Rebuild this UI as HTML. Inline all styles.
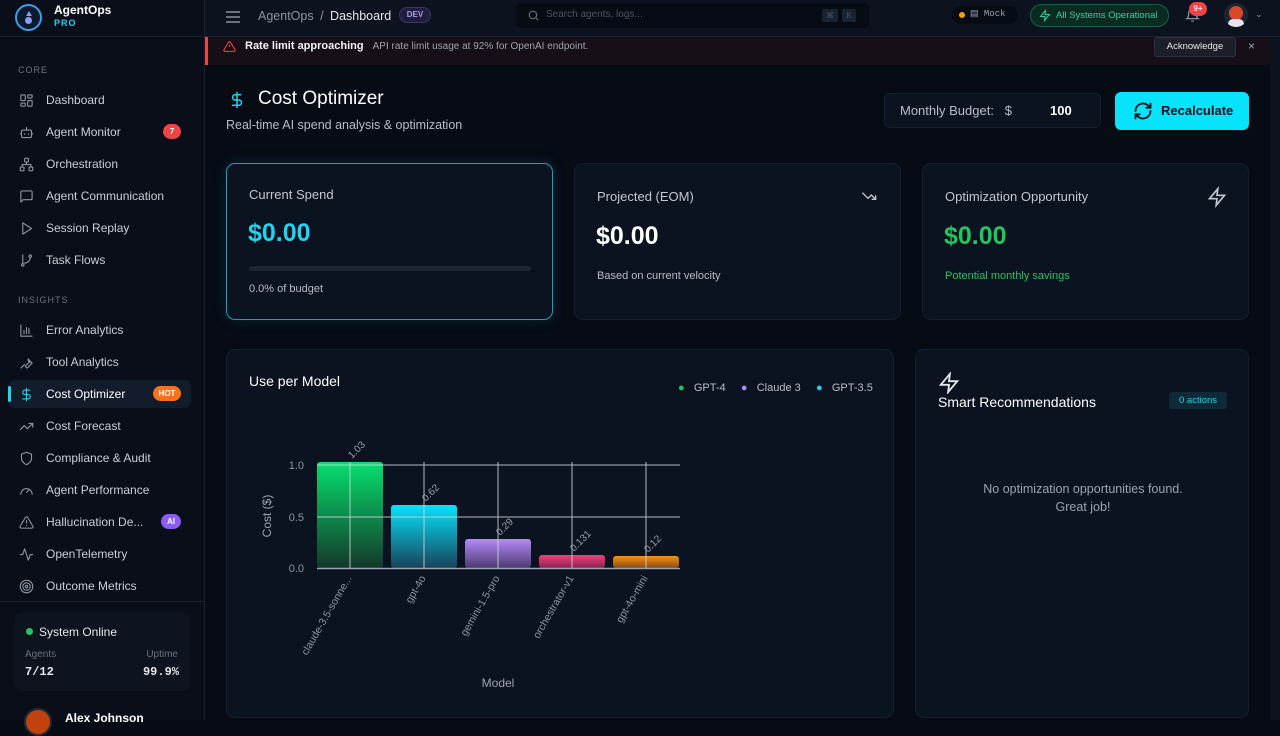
<!DOCTYPE html>
<html><head><meta charset="utf-8"><style>
*{box-sizing:border-box;margin:0;padding:0}
body{width:1280px;height:720px;overflow:hidden;background:#060b14;font-family:"Liberation Sans",sans-serif;color:#e5e7eb;position:relative}
.sb{position:absolute;left:0;top:0;width:205px;height:720px;background:#090e19;border-right:1px solid #1a2130}
.logo{height:37px;border-bottom:1px solid #1a2130;position:relative}
.sec{position:absolute;left:18px;font-size:9px;letter-spacing:1px;color:#6b7280}
.it{position:absolute;left:8px;width:183px;height:28px;display:flex;align-items:center;font-size:12px;color:#c9ced6}
.it svg{position:absolute;left:11px;width:15px;height:15px;fill:none;stroke:#8b95a3;stroke-width:1.8;stroke-linecap:round;stroke-linejoin:round}
.it span.t{position:absolute;left:38px}
.bd{position:absolute;font-size:8px;font-weight:bold;border-radius:8px;color:#fff;text-align:center;line-height:15px;height:15px}
.hdr{position:absolute;left:205px;top:0;right:0;height:37px;background:#0c131f;border-bottom:1px solid #1a2130}
.card{position:absolute;background:#0b1320;border:1px solid #161f2d;border-radius:9px}
.lbl{font-size:13px;color:#c2c8d0}
.big{font-size:25px;font-weight:bold}
</style></head><body>
<div class="sb">
 <div class="logo">
  <div style="position:absolute;left:15px;top:4px;width:27px;height:27px;border-radius:50%;border:2px solid #3aa0e8;background:#0d1a2e"></div>
  <div style="position:absolute;left:26px;top:11px;width:0;height:0;border-left:3px solid transparent;border-right:3px solid transparent;border-bottom:5px solid #8b9cf8"></div>
  <div style="position:absolute;left:25px;top:17px;width:7px;height:7px;border-radius:50%;background:#8b9cf8"></div>
  <div style="position:absolute;left:54px;top:3px;font-size:12px;font-weight:bold;color:#fff">AgentOps</div>
  <div style="position:absolute;left:54px;top:18px;font-size:9px;font-weight:bold;color:#22d3ee;letter-spacing:1px">PRO</div>
 </div>
 <div class="sec" style="top:65px">CORE</div>
 <div class="it" style="top:86px"><svg viewBox="0 0 24 24"><rect x="3" y="3" width="7" height="9" rx="1"/><rect x="14" y="3" width="7" height="5" rx="1"/><rect x="14" y="12" width="7" height="9" rx="1"/><rect x="3" y="16" width="7" height="5" rx="1"/></svg><span class="t">Dashboard</span></div>
 <div class="it" style="top:118px"><svg viewBox="0 0 24 24"><rect x="4" y="8" width="16" height="12" rx="2"/><path d="M12 8V4M9 14v1M15 14v1M2 14h2M20 14h2"/></svg><span class="t">Agent Monitor</span><div class="bd" style="left:155px;top:6px;width:18px;background:#ef4444">7</div></div>
 <div class="it" style="top:150px"><svg viewBox="0 0 24 24"><rect x="9" y="2" width="6" height="6" rx="1"/><rect x="2" y="16" width="6" height="6" rx="1"/><rect x="16" y="16" width="6" height="6" rx="1"/><path d="M5 16v-4h14v4M12 8v4"/></svg><span class="t">Orchestration</span></div>
 <div class="it" style="top:182px"><svg viewBox="0 0 24 24"><path d="M21 15a2 2 0 0 1-2 2H7l-4 4V5a2 2 0 0 1 2-2h14a2 2 0 0 1 2 2z"/></svg><span class="t">Agent Communication</span></div>
 <div class="it" style="top:214px"><svg viewBox="0 0 24 24"><path d="M6 3l14 9-14 9z"/></svg><span class="t">Session Replay</span></div>
 <div class="it" style="top:246px"><svg viewBox="0 0 24 24"><circle cx="6" cy="19" r="2"/><circle cx="18" cy="5" r="2"/><path d="M6 3v14M18 7a9 9 0 0 1-9 9"/></svg><span class="t">Task Flows</span></div>
 <div class="sec" style="top:295px">INSIGHTS</div>
 <div class="it" style="top:316px"><svg viewBox="0 0 24 24"><path d="M3 3v18h18M8 17v-5M12 17V7M16 17v-8"/></svg><span class="t">Error Analytics</span></div>
 <div class="it" style="top:348px"><svg viewBox="0 0 24 24"><path d="M14.7 6.3a4 4 0 0 0 5 5L21 13l-8 8-3-3 8-8zM3 21l6-6"/></svg><span class="t">Tool Analytics</span></div>
 <div class="it" style="top:380px;background:#131c2b;border-radius:7px"><div style="position:absolute;left:0;top:6px;width:3px;height:16px;background:#22d3ee;border-radius:2px"></div><svg viewBox="0 0 24 24" style="stroke:#22d3ee"><path d="M12 2v20M17 5H9.5a3.5 3.5 0 0 0 0 7h5a3.5 3.5 0 0 1 0 7H6"/></svg><span class="t" style="color:#fff">Cost Optimizer</span><div class="bd" style="left:145px;top:6px;width:28px;background:#f97316">HOT</div></div>
 <div class="it" style="top:412px"><svg viewBox="0 0 24 24"><path d="M22 7l-8.5 8.5-5-5L2 17M16 7h6v6"/></svg><span class="t">Cost Forecast</span></div>
 <div class="it" style="top:444px"><svg viewBox="0 0 24 24"><path d="M12 22s8-4 8-10V5l-8-3-8 3v7c0 6 8 10 8 10z"/></svg><span class="t">Compliance &amp; Audit</span></div>
 <div class="it" style="top:476px"><svg viewBox="0 0 24 24"><path d="M3 18a9 9 0 1 1 18 0M12 15l4-4"/></svg><span class="t">Agent Performance</span></div>
 <div class="it" style="top:508px"><svg viewBox="0 0 24 24"><path d="M10.3 3.9L1.8 18a2 2 0 0 0 1.7 3h17a2 2 0 0 0 1.7-3L13.7 3.9a2 2 0 0 0-3.4 0zM12 9v4M12 17h.01"/></svg><span class="t">Hallucination De...</span><div class="bd" style="left:153px;top:6px;width:20px;background:#8b5cf6">AI</div></div>
 <div class="it" style="top:540px"><svg viewBox="0 0 24 24"><path d="M22 12h-4l-3 9L9 3l-3 9H2"/></svg><span class="t">OpenTelemetry</span></div>
 <div class="it" style="top:572px"><svg viewBox="0 0 24 24"><circle cx="12" cy="12" r="10"/><circle cx="12" cy="12" r="6"/><circle cx="12" cy="12" r="2"/></svg><span class="t">Outcome Metrics</span></div>
 <div style="position:absolute;left:0;top:601px;width:204px;border-top:1px solid #1a2130"></div>
 <div style="position:absolute;left:14px;top:612px;width:176px;height:79px;background:#0d1420;border-radius:8px">
  <div style="position:absolute;left:12px;top:16px;width:7px;height:7px;border-radius:50%;background:#22c55e"></div>
  <div style="position:absolute;left:25px;top:13px;font-size:12px;color:#e5e7eb">System Online</div>
  <div style="position:absolute;left:11px;top:37px;font-size:10px;color:#6b7280">Agents</div>
  <div style="position:absolute;right:12px;top:37px;font-size:10px;color:#6b7280">Uptime</div>
  <div style="position:absolute;left:11px;top:53px;font-size:12px;font-family:'Liberation Mono',monospace;font-weight:bold;color:#e5e7eb">7/12</div>
  <div style="position:absolute;right:11px;top:53px;font-size:12px;font-family:'Liberation Mono',monospace;font-weight:bold;color:#e5e7eb">99.9%</div>
 </div>
 <div style="position:absolute;left:24px;top:708px;width:28px;height:28px;border-radius:50%;background:#c2410c;border:2px solid #1f2a3a"></div>
 <div style="position:absolute;left:65px;top:711px;font-size:12px;font-weight:bold;color:#fff">Alex Johnson</div>
</div>
<div class="hdr">
 <div style="position:absolute;left:21px;top:11px;width:14px;height:2px;background:#6b7280;box-shadow:0 5px 0 #6b7280,0 10px 0 #6b7280"></div>
 <div style="position:absolute;left:53px;top:9px;font-size:12.5px;color:#8b95a3">AgentOps <span style="margin:0 3px">/</span> <span style="color:#e5e7eb">Dashboard</span></div>
 <div style="position:absolute;left:194px;top:7px;width:32px;height:16px;border-radius:8px;background:#221d3d;border:1px solid #3b3470;font-size:8px;color:#a5a0e0;text-align:center;line-height:14px;font-weight:bold">DEV</div>
 <div style="position:absolute;left:311px;top:3px;width:353px;height:25px;background:#060b14;border-radius:5px">
  <svg style="position:absolute;left:11px;top:6px" width="13" height="13" viewBox="0 0 24 24" fill="none" stroke="#6b7280" stroke-width="2"><circle cx="11" cy="11" r="7"/><path d="M21 21l-5-5"/></svg>
  <div style="position:absolute;left:30px;top:6px;font-size:10px;color:#4b5563">Search agents, logs...</div>
  <div style="position:absolute;left:306px;top:6px;width:16px;height:13px;background:#1a2330;border-radius:2px;font-size:8px;color:#4b5563;text-align:center;line-height:13px">⌘</div>
  <div style="position:absolute;left:326px;top:6px;width:14px;height:13px;background:#1a2330;border-radius:2px;font-size:8px;color:#4b5563;text-align:center;line-height:13px">K</div>
 </div>
 <div style="position:absolute;left:747px;top:6px;width:66px;height:18px;background:#060b14;border-radius:9px"><div style="position:absolute;left:7px;top:6px;width:6px;height:6px;border-radius:50%;background:#f59e0b"></div><div style="position:absolute;left:18px;top:3px;font-size:9px;font-family:'Liberation Mono',monospace;color:#9ca3af">▤ Mock</div></div>
 <div style="position:absolute;left:825px;top:4px;width:139px;height:23px;background:#0b2a22;border:1px solid #166048;border-radius:12px;font-size:9.5px;color:#34d399;line-height:21px;padding-left:25px">All Systems Operational<svg style="position:absolute;left:8px;top:4px" width="12" height="13" viewBox="0 0 24 24" fill="none" stroke="#34d399" stroke-width="2"><path d="M13 2L3 14h9l-1 8 10-12h-9z"/></svg></div>
 <svg style="position:absolute;left:980px;top:8px" width="15" height="15" viewBox="0 0 24 24" fill="none" stroke="#8b95a3" stroke-width="2"><path d="M6 8a6 6 0 0 1 12 0c0 7 3 9 3 9H3s3-2 3-9M10 21h4"/></svg>
 <div style="position:absolute;left:984px;top:2px;width:18px;height:14px;border-radius:7px;background:#ef4444;font-size:8px;font-weight:bold;text-align:center;line-height:14px">9+</div>
 <div style="position:absolute;left:1019px;top:3px;width:24px;height:24px;border-radius:50%;background:#1b2433;overflow:hidden"><div style="position:absolute;left:5px;top:3px;width:14px;height:14px;border-radius:50%;background:#d9482b"></div><div style="position:absolute;left:4px;top:16px;width:16px;height:10px;border-radius:6px;background:#e5e7eb"></div></div>
 <div style="position:absolute;left:1050px;top:9px;font-size:9px;color:#8b95a3">⌄</div>
</div>
<div style="position:absolute;left:205px;top:37px;width:1065px;height:28px;background:#170f17;border-left:3px solid #ef4444">
 <svg style="position:absolute;left:15px;top:3px" width="13" height="13" viewBox="0 0 24 24" fill="none" stroke="#ef4444" stroke-width="2"><path d="M10.3 3.9L1.8 18a2 2 0 0 0 1.7 3h17a2 2 0 0 0 1.7-3L13.7 3.9a2 2 0 0 0-3.4 0zM12 9v4M12 17h.01"/></svg>
 <div style="position:absolute;left:37px;top:3px;font-size:11px;font-weight:bold;color:#f3f4f6">Rate limit approaching <span style="font-weight:normal;color:#9ca3af;font-size:10px;margin-left:6px">API rate limit usage at 92% for OpenAI endpoint.</span></div>
 <div style="position:absolute;left:946px;top:0px;width:82px;height:20px;background:#1c1f27;border:1px solid #2d3340;border-radius:3px;font-size:9.5px;color:#e5e7eb;text-align:center;line-height:18px">Acknowledge</div>
 <div style="position:absolute;left:1040px;top:2px;font-size:12px;color:#9ca3af">×</div>
</div>
<div style="position:absolute;left:1270px;top:37px;width:10px;height:683px;background:#0c131f"></div>
<svg style="position:absolute;left:228px;top:89px" width="18" height="22" viewBox="0 0 24 24" fill="none" stroke="#22d3ee" stroke-width="2" stroke-linecap="round"><path d="M12 2v20M17 5H9.5a3.5 3.5 0 0 0 0 7h5a3.5 3.5 0 0 1 0 7H6"/></svg>
<div style="position:absolute;left:258px;top:88px;font-size:19px;color:#fff">Cost Optimizer</div>
<div style="position:absolute;left:226px;top:118px;font-size:12.5px;color:#b8bec7">Real-time AI spend analysis &amp; optimization</div>
<div style="position:absolute;left:884px;top:93px;width:217px;height:35px;background:#0b1320;border:1px solid #161f2d;border-radius:6px;font-size:13px;color:#b8bec7;line-height:33px;padding-left:15px">Monthly Budget:&nbsp;&nbsp; $<span style="position:absolute;left:165px;color:#fff;font-weight:bold">100</span></div>
<div style="position:absolute;left:1115px;top:92px;width:134px;height:38px;background:#06e3fb;border-radius:6px;font-size:13px;font-weight:bold;color:#04111a;line-height:38px;padding-left:46px">Recalculate<svg style="position:absolute;left:18px;top:9px" width="20" height="20" viewBox="0 0 24 24" fill="none" stroke="#04111a" stroke-width="2.2" stroke-linecap="round"><path d="M3 12a9 9 0 0 1 15.5-6.2L21 8M21 3v5h-5M21 12a9 9 0 0 1-15.5 6.2L3 16M3 21v-5h5"/></svg></div>
<div class="card" style="left:226px;top:163px;width:327px;height:157px;border-color:#1ba0b8;box-shadow:0 0 14px rgba(34,211,238,.15)">
 <div class="lbl" style="position:absolute;left:22px;top:23px">Current Spend</div>
 <div class="big" style="position:absolute;left:21px;top:55px;color:#22d3ee">$0.00</div>
 <div style="position:absolute;left:22px;top:102px;width:282px;height:5px;background:#1e2633;border-radius:3px"></div>
 <div style="position:absolute;left:22px;top:119px;font-size:11px;color:#b8bec7">0.0% of budget</div>
</div>
<div class="card" style="left:574px;top:163px;width:327px;height:157px">
 <div class="lbl" style="position:absolute;left:22px;top:25px">Projected (EOM)</div>
 <svg style="position:absolute;left:283px;top:24px" width="22" height="16" viewBox="0 0 24 24" fill="none" stroke="#c2c8d0" stroke-width="2"><path d="M2 7l8.5 8.5 5-5L22 17M16 17h6v-6"/></svg>
 <div class="big" style="position:absolute;left:21px;top:58px;color:#fff">$0.00</div>
 <div style="position:absolute;left:22px;top:106px;font-size:11px;color:#b8bec7">Based on current velocity</div>
</div>
<div class="card" style="left:922px;top:163px;width:327px;height:157px">
 <div class="lbl" style="position:absolute;left:22px;top:25px">Optimization Opportunity</div>
 <svg style="position:absolute;left:284px;top:22px" width="20" height="22" viewBox="0 0 24 24" fill="none" stroke="#c2c8d0" stroke-width="2"><path d="M13 2L3 14h9l-1 8 10-12h-9z"/></svg>
 <div class="big" style="position:absolute;left:21px;top:58px;color:#22c55e">$0.00</div>
 <div style="position:absolute;left:22px;top:106px;font-size:11px;color:#22c55e">Potential monthly savings</div>
</div>
<div class="card" style="left:226px;top:349px;width:668px;height:369px">
 <div style="position:absolute;left:22px;top:23px;font-size:14px;color:#fff">Use per Model</div>
 <div style="position:absolute;left:451px;top:32px;font-size:11px;color:#b8bec7;white-space:nowrap"><span style="color:#22c55e">●</span>&nbsp;&nbsp; GPT-4 &nbsp;&nbsp;&nbsp;&nbsp;<span style="color:#a78bfa">●</span>&nbsp;&nbsp; Claude 3 &nbsp;&nbsp;&nbsp;&nbsp;<span style="color:#22d3ee">●</span>&nbsp;&nbsp; GPT-3.5</div>
</div>
<svg style="position:absolute;left:0;top:0" width="1280" height="720">
 <defs>
  <linearGradient id="g1" x1="0" y1="0" x2="0" y2="1"><stop offset="0" stop-color="#05e06e"/><stop offset="1" stop-color="#14382a"/></linearGradient>
  <linearGradient id="g2" x1="0" y1="0" x2="0" y2="1"><stop offset="0" stop-color="#06e3fb"/><stop offset="1" stop-color="#17435a"/></linearGradient>
  <linearGradient id="g3" x1="0" y1="0" x2="0" y2="1"><stop offset="0" stop-color="#b58af8"/><stop offset="1" stop-color="#4b3a70"/></linearGradient>
  <linearGradient id="g4" x1="0" y1="0" x2="0" y2="1"><stop offset="0" stop-color="#f0417a"/><stop offset="1" stop-color="#8b2350"/></linearGradient>
  <linearGradient id="g5" x1="0" y1="0" x2="0" y2="1"><stop offset="0" stop-color="#f59316"/><stop offset="1" stop-color="#8a4a12"/></linearGradient>
 </defs>
 <rect x="317" y="462" width="66" height="106" rx="3" fill="url(#g1)"/>
 <rect x="391" y="505" width="66" height="63" rx="3" fill="url(#g2)"/>
 <rect x="465" y="539" width="66" height="29" rx="3" fill="url(#g3)"/>
 <rect x="539" y="555" width="66" height="13" rx="3" fill="url(#g4)"/>
 <rect x="613" y="556" width="66" height="12" rx="3" fill="url(#g5)"/>
 <g stroke="#d1d5db" stroke-width="1" opacity=".85">
  <line x1="317" y1="465" x2="680" y2="465"/><line x1="317" y1="517" x2="680" y2="517"/>
  <line x1="350" y1="462" x2="350" y2="568"/><line x1="424" y1="462" x2="424" y2="568"/><line x1="498" y1="462" x2="498" y2="568"/><line x1="572" y1="462" x2="572" y2="568"/><line x1="646" y1="462" x2="646" y2="568"/>
 </g>
 <line x1="317" y1="568.5" x2="680" y2="568.5" stroke="#9ca3af" stroke-width="1.5"/>
 <g font-family="Liberation Sans" font-size="11" fill="#8b95a3" text-anchor="end">
  <text x="304" y="469">1.0</text><text x="304" y="521">0.5</text><text x="304" y="572">0.0</text>
 </g>
 <text x="0" y="0" transform="translate(271,516) rotate(-90)" text-anchor="middle" font-family="Liberation Sans" font-size="12" fill="#9ca3af">Cost ($)</text>
 <text x="498" y="687" text-anchor="middle" font-family="Liberation Sans" font-size="12" fill="#9ca3af">Model</text>
 <g font-family="Liberation Sans" font-size="10" fill="#9ca3af">
  <text transform="translate(352,459) rotate(-45)">1.03</text>
  <text transform="translate(426,502) rotate(-45)">0.62</text>
  <text transform="translate(500,536) rotate(-45)">0.29</text>
  <text transform="translate(574,552) rotate(-45)">0.131</text>
  <text transform="translate(648,553) rotate(-45)">0.12</text>
 </g>
 <g font-family="Liberation Sans" font-size="10.5" fill="#8b95a3" text-anchor="end">
  <text transform="translate(352,578) rotate(-60)">claude-3.5-sonne...</text>
  <text transform="translate(426,578) rotate(-60)">gpt-4o</text>
  <text transform="translate(500,578) rotate(-60)">gemini-1.5-pro</text>
  <text transform="translate(574,578) rotate(-60)">orchestrator-v1</text>
  <text transform="translate(648,578) rotate(-60)">gpt-4o-mini</text>
 </g>
</svg>
<div class="card" style="left:915px;top:349px;width:334px;height:369px">
 <svg style="position:absolute;left:22px;top:22px" width="22" height="22" viewBox="0 0 24 24" fill="none" stroke="#e5e7eb" stroke-width="2"><path d="M13 2L3 14h9l-1 8 10-12h-9z"/></svg>
 <div style="position:absolute;left:22px;top:44px;font-size:14px;color:#fff">Smart Recommendations</div>
 <div style="position:absolute;left:253px;top:42px;width:58px;height:17px;background:#0d2a36;border-radius:3px;font-size:9.5px;color:#22d3ee;text-align:center;line-height:17px">0 actions</div>
 <div style="position:absolute;left:0;width:334px;top:130px;font-size:12.5px;color:#9ca3af;text-align:center;line-height:18px">No optimization opportunities found.<br>Great job!</div>
</div>
</body></html>
